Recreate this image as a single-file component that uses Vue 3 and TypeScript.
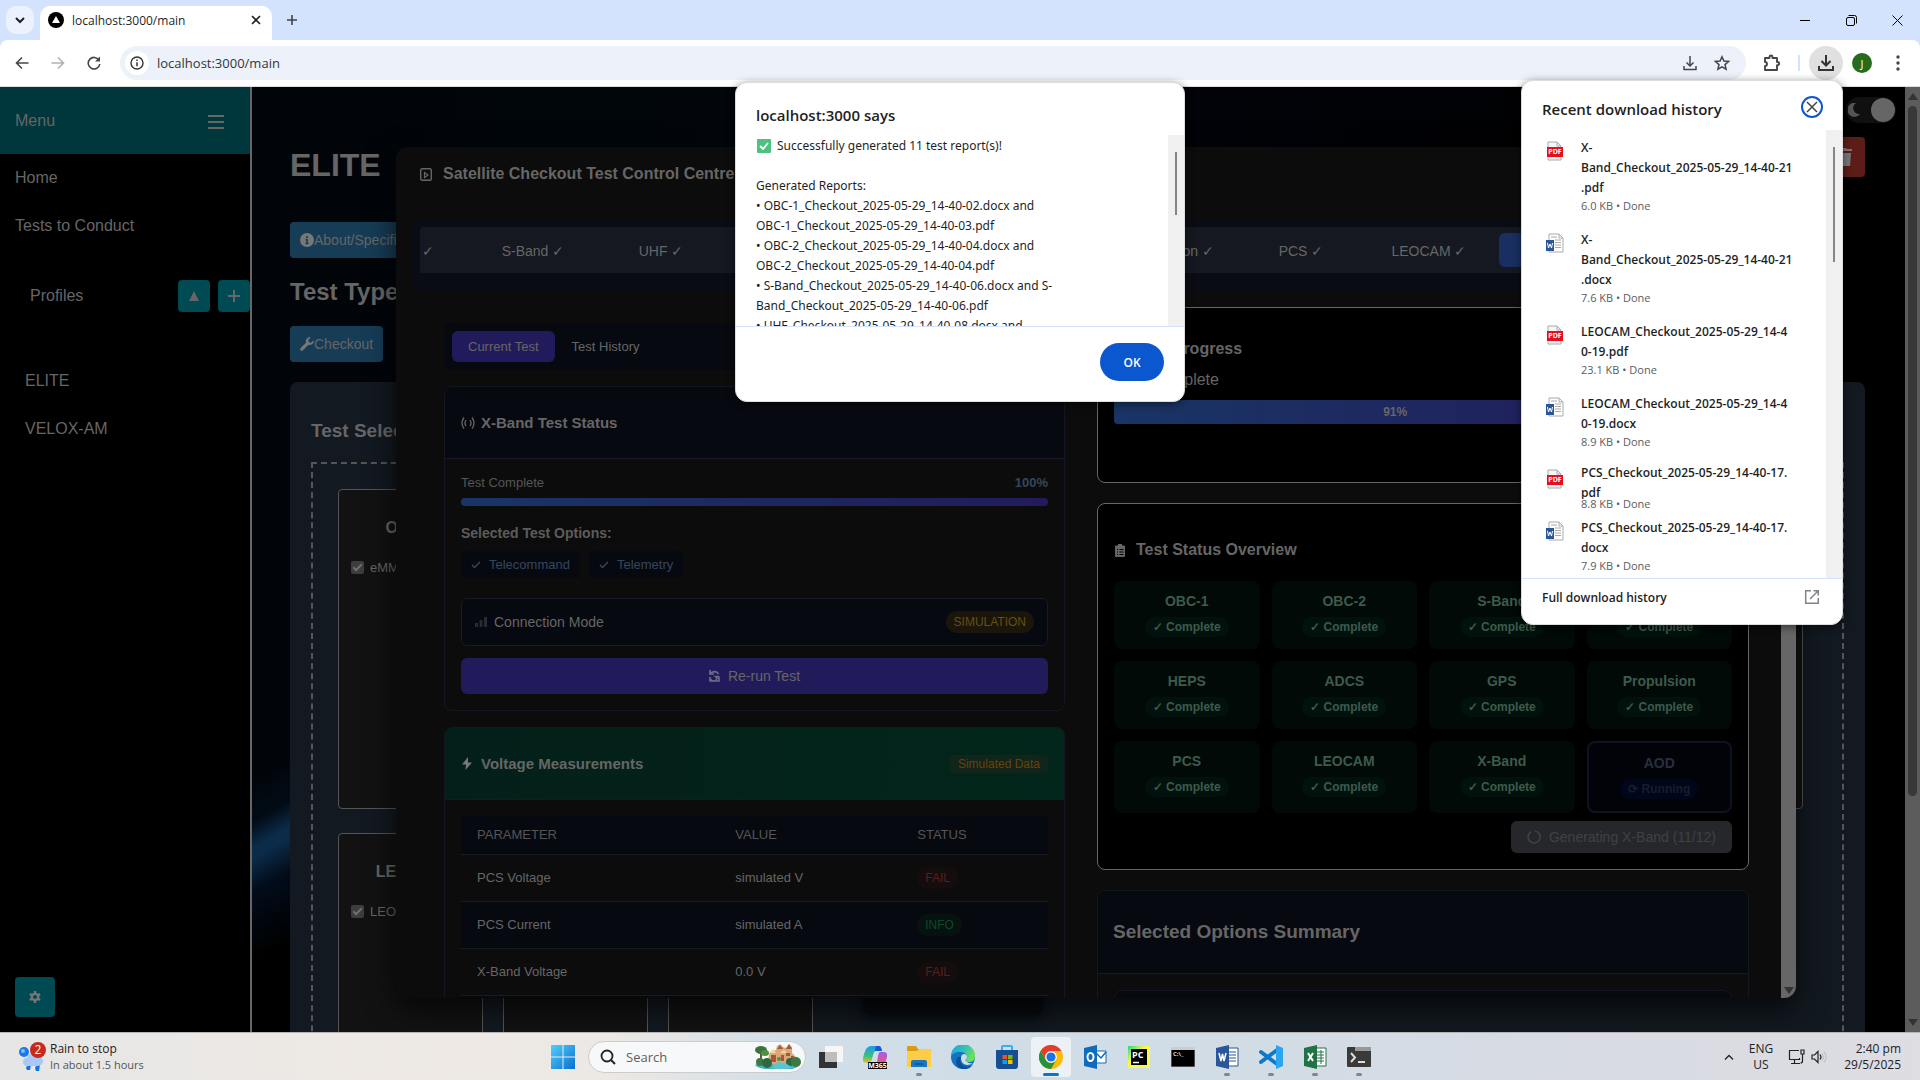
<script setup lang="ts">
interface Download { name: string[]; meta: string; kind: 'pdf' | 'docx'; compact?: boolean }
interface Reading { parameter: string; value: string; status: 'FAIL' | 'INFO' }
interface Subsystem { name: string; options: string[] }

const menu = ['Home', 'Tests to Conduct']
const profiles = ['ELITE', 'VELOX-AM']

const subsystems: Subsystem[] = [
  { name: 'OBC-1', options: ['eMMC'] },
  { name: 'OBC-2', options: [] },
  { name: 'S-Band', options: [] },
  { name: 'UHF', options: [] },
  { name: 'HEPS', options: [] },
  { name: 'ADCS', options: [] },
  { name: 'GPS', options: [] },
  { name: 'Propulsion', options: [] },
  { name: 'PCS', options: [] },
  { name: 'LEOCAM', options: ['LEOCAM'] },
  { name: 'X-Band', options: [] },
  { name: 'AOD', options: [] },
]

const tabs = ['OBC-2', 'S-Band', 'UHF', 'HEPS', 'ADCS', 'GPS', 'Propulsion', 'PCS', 'LEOCAM', 'X-Band']
const options = ['Telecommand', 'Telemetry']

const readings: Reading[] = [
  { parameter: 'PCS Voltage', value: 'simulated V', status: 'FAIL' },
  { parameter: 'PCS Current', value: 'simulated A', status: 'INFO' },
  { parameter: 'X-Band Voltage', value: '0.0 V', status: 'FAIL' },
  { parameter: 'X-Band Current', value: '0.0 A', status: 'FAIL' },
]

const progress = 91

const reportLines = [
  'Generated Reports:',
  '• OBC-1_Checkout_2025-05-29_14-40-02.docx and',
  'OBC-1_Checkout_2025-05-29_14-40-03.pdf',
  '• OBC-2_Checkout_2025-05-29_14-40-04.docx and',
  'OBC-2_Checkout_2025-05-29_14-40-04.pdf',
  '• S-Band_Checkout_2025-05-29_14-40-06.docx and S-',
  'Band_Checkout_2025-05-29_14-40-06.pdf',
  '• UHF_Checkout_2025-05-29_14-40-08.docx and',
]

const downloads: Download[] = [
  { name: ['X-', 'Band_Checkout_2025-05-29_14-40-21', '.pdf'], meta: '6.0 KB • Done', kind: 'pdf' },
  { name: ['X-', 'Band_Checkout_2025-05-29_14-40-21', '.docx'], meta: '7.6 KB • Done', kind: 'docx' },
  { name: ['LEOCAM_Checkout_2025-05-29_14-4', '0-19.pdf'], meta: '23.1 KB • Done', kind: 'pdf' },
  { name: ['LEOCAM_Checkout_2025-05-29_14-4', '0-19.docx'], meta: '8.9 KB • Done', kind: 'docx' },
  { name: ['PCS_Checkout_2025-05-29_14-40-17.', 'pdf'], meta: '8.8 KB • Done', kind: 'pdf', compact: true },
  { name: ['PCS_Checkout_2025-05-29_14-40-17.', 'docx'], meta: '7.9 KB • Done', kind: 'docx' },
]
</script>

<template>
  <div class="screen">
    <header class="tabstrip">
      <button class="tab-search" aria-label="Search tabs">
        <svg width="10" height="8" viewBox="0 0 10 8"><path d="M1 2l4 4 4-4" fill="none" stroke="#1f1f1f" stroke-width="2" /></svg>
      </button>
      <div class="tab">
        <svg width="16" height="16" viewBox="0 0 16 16"><circle cx="8" cy="8" r="8" fill="#000" /><path d="M8 4l4 7H4z" fill="#fff" /></svg>
        <span>localhost:3000/main</span>
        <button aria-label="Close tab"><svg width="10" height="10" viewBox="0 0 10 10"><path d="M1 1l8 8M9 1l-8 8" stroke="#1f1f1f" stroke-width="1.600" /></svg></button>
      </div>
      <button class="new-tab" aria-label="New tab"><svg width="12" height="12" viewBox="0 0 12 12"><path d="M6 1v10M1 6h10" stroke="#444" stroke-width="1.600" /></svg></button>
      <div class="window-controls">
        <button aria-label="Minimise"><svg width="10" height="10" viewBox="0 0 10 10"><path d="M0 5.500h10" stroke="#000" /></svg></button>
        <button aria-label="Restore"><svg width="11" height="11" viewBox="0 0 11 11"><g fill="none" stroke="#000"><rect x=".5" y="2.500" width="8" height="8" rx="1.500" /><path d="M2.500 .5h6a2 2 0 0 1 2 2v6" /></g></svg></button>
        <button aria-label="Close"><svg width="11" height="11" viewBox="0 0 11 11"><path d="M.5 .5l10 10M10.500 .5l-10 10" stroke="#000" /></svg></button>
      </div>
    </header>

    <nav class="toolbar">
      <button aria-label="Back"><svg width="14" height="14" viewBox="0 0 14 14"><path d="M13.500 7H2M7 1.500L1.500 7 7 12.500" fill="none" stroke="#454746" stroke-width="1.600" /></svg></button>
      <button aria-label="Forward"><svg width="14" height="14" viewBox="0 0 14 14"><path d="M.5 7H12M7 1.500L12.500 7 7 12.500" fill="none" stroke="#b0b2b4" stroke-width="1.600" /></svg></button>
      <button aria-label="Reload"><svg width="14" height="14" viewBox="0 0 14 14"><path d="M12 4.200A5.800 5.800 0 1 0 12.800 8" fill="none" stroke="#454746" stroke-width="1.600" /><path d="M13 .5v5H8z" fill="#454746" /></svg></button>
      <div class="omnibox">
        <span class="site-info"><svg width="14" height="14" viewBox="0 0 14 14"><circle cx="7" cy="7" r="6" fill="none" stroke="#333" stroke-width="1.400" /><path d="M7 6.200V10.300M7 3.600V5" stroke="#333" stroke-width="1.500" /></svg></span>
        <input type="text" aria-label="Address" value="localhost:3000/main" />
        <button aria-label="Install"><svg width="14" height="16" viewBox="0 0 14 16"><path d="M7 1v10M3.500 7.500L7 11l3.500-3.500M1 11v3.500h12V11" fill="none" stroke="#454746" stroke-width="1.500" /></svg></button>
        <button aria-label="Bookmark"><svg width="16" height="16" viewBox="0 0 16 16"><path d="M8 1.800l1.900 4.300 4.700.4-3.600 3.100 1.100 4.600L8 11.800l-4.100 2.400L5 9.600 1.400 6.500l4.700-.4z" fill="none" stroke="#454746" stroke-width="1.500" /></svg></button>
      </div>
      <button class="puzzle" aria-label="Extensions"><svg width="18" height="18" viewBox="0 0 18 18"><path d="M2 4h4.500V3a1.500 1.500 0 0 1 3 0v1H14v4h.6a1.500 1.500 0 0 1 0 3.200H14V16H2v-4a2 2 0 0 0 0-4z" fill="none" stroke="#454746" stroke-width="1.900" stroke-linejoin="round" /></svg></button>
      <i class="divider"></i>
      <button class="download-button" aria-label="Downloads"><svg width="18" height="18" viewBox="0 0 18 18"><path d="M9 1v10M4.500 7L9 11.500 13.500 7M2 12v4h14v-4" fill="none" stroke="#333" stroke-width="2" /></svg></button>
      <button class="avatar" aria-label="Profile">J</button>
      <button aria-label="More"><svg width="4" height="16" viewBox="0 0 4 16"><g fill="#454746"><circle cx="2" cy="2" r="1.700" /><circle cx="2" cy="8" r="1.700" /><circle cx="2" cy="14" r="1.700" /></g></svg></button>
    </nav>

    <div class="page">
      <aside class="sidebar">
        <div class="menu-head">
          <span>Menu</span>
          <button aria-label="Toggle menu"><svg width="16" height="16" viewBox="0 0 16 16"><path d="M0 3h16M0 9h16M0 15h16" stroke="#666" stroke-width="2" /></svg></button>
        </div>
        <a v-for="m in menu" :key="m" href="#">{{ m }}</a>
        <div class="profiles-head">
          <span>Profiles</span>
          <button aria-label="Collapse"><svg width="10" height="10" viewBox="0 0 10 10"><path d="M5 0l5 10H0z" fill="#666" /></svg></button>
          <button aria-label="Add profile"><svg width="12" height="12" viewBox="0 0 12 12"><path d="M6 0v12M0 6h12" stroke="#666" stroke-width="2" /></svg></button>
        </div>
        <a v-for="p in profiles" :key="p" class="profile" href="#">{{ p }}</a>
        <button class="gear" aria-label="Settings">
          <svg width="12" height="12" viewBox="0 0 14 14"><circle cx="7" cy="7" r="3.700" fill="none" stroke="#777" stroke-width="2.800" /><path d="M7 0v3M7 11v3M1 3.500l2.500 1.500M10.500 9L13 10.500M1 10.500L3.500 9M10.500 5L13 3.500" stroke="#777" stroke-width="2.800" /></svg>
        </button>
      </aside>

      <main class="content">
        <i class="horizon"></i>
        <div class="theme">
          <svg width="12" height="14" viewBox="0 0 12 14"><path d="M8 0a7 7 0 1 0 4 11A6 6 0 0 1 8 0z" fill="#555" /></svg>
          <i></i>
        </div>
        <div class="title-row">
          <h1>ELITE</h1>
          <button class="trash" aria-label="Delete"><svg width="16" height="18" viewBox="0 0 16 18"><path d="M0 1h5l1-1h4l1 1h5v2H0zM1 5h14l-1 13H2z" fill="#777" /></svg></button>
        </div>
        <button class="blue about">
          <svg width="14" height="14" viewBox="0 0 14 14"><circle cx="7" cy="7" r="7" fill="#777" /><path d="M7 6v5M7 3v2M5.500 10.500h3M5.500 6.500H7" stroke="#163c56" stroke-width="1.600" /></svg>About/Specifications
        </button>
        <h2>Test Type</h2>
        <button class="blue">
          <svg width="14" height="14" viewBox="0 0 14 14"><path d="M1.800 12.200L8 6" stroke="#777" stroke-width="3.200" stroke-linecap="round" /><path d="M13.600 3.200L11 5.700 8.400 5.600 8.300 3 10.800.4A4 4 0 0 0 6 5.500a4 4 0 0 0 7.600-2.300z" fill="#777" /></svg>Checkout
        </button>
        <section class="panel">
          <h3>Test Selection</h3>
          <div class="dashed">
            <article v-for="s in subsystems" :key="s.name">
              <h4>{{ s.name }}</h4>
              <label v-for="o in s.options" :key="o"><input type="checkbox" checked disabled />{{ o }}</label>
            </article>
          </div>
          <button class="start" aria-label="Start tests"></button>
        </section>
      </main>
      <div class="page-scroll"><i class="up"></i><b></b><i class="down"></i></div>

      <div class="modal">
        <div class="modal-main">
          <div class="modal-head">
            <svg width="12" height="13" viewBox="0 0 12 13"><rect x=".7" y=".7" width="10.600" height="11.600" rx="1.500" fill="none" stroke="#666" stroke-width="1.400" /><path d="M4.500 4.500l3.500 2.500-3.500 2.500z" fill="none" stroke="#666" stroke-width="1.200" /></svg>
            <h2>Satellite Checkout Test Control Centre</h2>
          </div>
          <div class="tabs">
            <div class="tabs-view">
              <div class="tabs-row">
                <button v-for="t in tabs" :key="t" :class="{ active: t === 'X-Band' }">{{ t }} ✓</button>
              </div>
            </div>
          </div>
          <div class="columns">
            <div class="left">
              <div class="subtabs">
                <button class="on">Current Test</button>
                <button>Test History</button>
              </div>
              <section class="card">
                <header>
                  <svg width="14" height="12" viewBox="0 0 14 12"><g fill="none" stroke="#666" stroke-width="1.300"><path d="M3 .5Q-1 6 3 11.500M11 .5q4 5.500 0 11M5 3Q3 6 5 9M9 3q2 3 0 6" /></g></svg>
                  <h3>X-Band Test Status</h3>
                </header>
                <div class="card-body">
                  <div class="between line"><span>Test Complete</span><strong>100%</strong></div>
                  <div class="bar"></div>
                  <h4>Selected Test Options:</h4>
                  <div class="chips">
                    <span v-for="o in options" :key="o"><svg width="10" height="8" viewBox="0 0 10 8"><path d="M1 4l2.500 2.500L9 1" fill="none" stroke="#33475e" stroke-width="1.500" /></svg>{{ o }}</span>
                  </div>
                  <div class="connection between">
                    <svg width="12" height="10" viewBox="0 0 12 10"><path d="M0 6h3v4H0zM4.500 3h3v7h-3zM9 0h3v10H9z" fill="#282b31" /></svg>
                    <span>Connection Mode</span>
                    <em>SIMULATION</em>
                  </div>
                  <button class="rerun">
                    <svg width="11" height="12" viewBox="0 0 11 12"><path d="M1 0v4h4M1.500 4A4.500 4.500 0 0 1 9.500 4M10 6.500H6.500L8 8A3.500 3.500 0 0 1 1 7V11H10V6.500" fill="none" stroke="#6d6a86" stroke-width="1.700" /></svg>
                    Re-run Test
                  </button>
                </div>
              </section>
              <section class="card voltage">
                <header class="green">
                  <svg width="12" height="13" viewBox="0 0 12 13"><path d="M7 0L1 7.500h4L4.500 13 11 5.500H7z" fill="#777" /></svg>
                  <h3>Voltage Measurements</h3>
                  <em>Simulated Data</em>
                </header>
                <div class="card-body">
                  <table>
                    <thead><tr><th>PARAMETER</th><th>VALUE</th><th>STATUS</th></tr></thead>
                    <tbody>
                      <tr v-for="r in readings" :key="r.parameter">
                        <td>{{ r.parameter }}</td><td>{{ r.value }}</td>
                        <td><span :class="r.status.toLowerCase()">{{ r.status }}</span></td>
                      </tr>
                    </tbody>
                  </table>
                </div>
              </section>
            </div>

            <div class="right">
              <section class="outlined overall">
                <h3>Overall Progress</h3>
                <p>{{ progress }}% Complete</p>
                <div class="track"><div :style="{ width: progress + '%' }">{{ progress }}%</div></div>
              </section>
              <section class="outlined overview">
                <div class="overview-head">
                  <svg width="10" height="13" viewBox="0 0 10 13"><path d="M1 1.500h2V0h4v1.500h2q1 0 1 1V12q0 1-1 1H1q-1 0-1-1V2.500q0-1 1-1z" fill="#666" /><path d="M2 5.500h1M4.500 5.500h4M2 8h1M4.500 8h4M2 10.500h1M4.500 10.500h4" stroke="#000" /></svg>
                  <h3>Test Status Overview</h3>
                </div>
                <div class="status-grid">
                  <div v-for="s in subsystems" :key="s.name" :class="{ running: s.name === 'AOD' }">
                    <b>{{ s.name }}</b>
                    <span>{{ s.name === 'AOD' ? '⟳ Running' : '✓ Complete' }}</span>
                  </div>
                </div>
                <button class="generating" disabled>
                  <svg width="14" height="14" viewBox="0 0 14 14"><path d="M8 1a6 6 0 1 1-4 .8" fill="none" stroke="#404145" stroke-width="1.600" /></svg>
                  Generating X-Band (11/12)
                </button>
              </section>
              <section class="card summary">
                <header><h2>Selected Options Summary</h2></header>
                <div class="card-body"><div class="inner"></div></div>
              </section>
            </div>
          </div>
        </div>
        <div class="modal-scroll"><i class="down"></i></div>
      </div>
    </div>

    <footer class="taskbar">
      <div class="weather">
        <svg width="28" height="32" viewBox="0 0 28 32">
          <circle cx="5" cy="11" r="5" fill="#1b78e8" /><circle cx="4" cy="10" r="2" fill="#7cc0ff" />
          <path d="M7 27l2-4 3 1-1 5H8zM16 27l2-4 3 1-1 6h-3z" fill="#1673e6" />
          <path d="M8 25a4 4 0 0 1 0-8 6 6 0 0 1 11-2 5 5 0 0 1 0 10z" fill="#a9c8f6" />
          <circle cx="19" cy="9" r="8" fill="#c42b1c" />
          <text x="19" y="13" text-anchor="middle" font-size="12" fill="#fff">2</text>
        </svg>
        <div><span>Rain to stop</span><small>In about 1.5 hours</small></div>
      </div>
      <div class="dock">
        <button aria-label="Start"><svg width="24" height="24" viewBox="0 0 24 24"><defs><linearGradient id="win" x1="0" y1="0" x2="1" y2="1"><stop offset="0" stop-color="#4fd0ff" /><stop offset="1" stop-color="#0a6fd0" /></linearGradient></defs><path d="M0 0h11.500v11.500H0zM12.500 0H24v11.500H12.500zM0 12.500h11.500V24H0zM12.500 12.500H24V24H12.500z" fill="url(#win)" /></svg></button>
        <label class="search">
          <svg width="16" height="16" viewBox="0 0 16 16"><circle cx="7" cy="7" r="5.500" fill="none" stroke="#222" stroke-width="1.800" /><path d="M11 11l4 4" stroke="#222" stroke-width="2" /></svg>
          <input type="text" placeholder="Search" aria-label="Search" />
          <svg width="46" height="26" viewBox="0 0 46 26">
            <path d="M0 21q10-5 22-2t23 0q0 4-8 6H10q-8-1-10-4z" fill="#45b3c4" />
            <path d="M13 19l1-9 4-3 3-1 1-4 3-2 3 3 3 1 3-4 3 3v6l4 4 2 7q-12 3-28 0z" fill="#dba878" />
            <path d="M22 5l3-4 3 4zM31 5l3-5 3 5zM16 11h5v7h-5zM26 11h3v6h-3zM31 9h4v3h-4zM36 12h3v4h-3z" fill="#a3583a" />
            <path d="M14 9l4-4 3 4zM25 9l4-3 3 3z" fill="#f4d8a0" />
            <path d="M5 9h2v9H5z" fill="#765039" /><ellipse cx="6" cy="6" rx="6" ry="4" fill="#39733d" /><ellipse cx="10" cy="9" rx="4" ry="3" fill="#4c8f45" />
            <circle cx="5" cy="18" r="4" fill="#3b7a42" /><circle cx="12" cy="19" r="5" fill="#2f6840" /><circle cx="35" cy="18" r="4" fill="#2f6840" /><circle cx="41" cy="18" r="5" fill="#3b7a42" /><circle cx="24" cy="15" r="2" fill="#4c8f45" />
            <path d="M17 24q4-8 12-5 6 2 7 5-9 2-19 0z" fill="#58c5d2" />
          </svg>
        </label>
        <button aria-label="Task view"><svg width="24" height="24" viewBox="0 0 24 24"><path d="M0 7h18v16H0z" fill="#333" /><path d="M6 1h18v16H6z" fill="#f6f6f6" /><path d="M6 7h12v10H6z" fill="#bdbdbd" /></svg></button>
        <button aria-label="Microsoft 365">
          <svg width="24" height="24" viewBox="0 0 24 24">
            <defs>
              <linearGradient id="cpa" x1="0" y1="0" x2="0" y2="1"><stop offset="0" stop-color="#1a9bf0" /><stop offset=".6" stop-color="#3cc07a" /><stop offset="1" stop-color="#f0c020" /></linearGradient>
              <linearGradient id="cpb" x1="0" y1="0" x2="0" y2="1"><stop offset="0" stop-color="#a35ce8" /><stop offset=".6" stop-color="#e0569a" /><stop offset="1" stop-color="#f58a4a" /></linearGradient>
            </defs>
            <path d="M8 1h8q2 0 3 5h-6q-2 0-3 4l-1 4q-1 4-4 4H4q-5 0-4-5 1-5 3-9 2-3 5-3z" fill="url(#cpa)" />
            <path d="M13 1h3q2 0 3 5h-6q-2 0 0-5z" fill="#1a57d0" />
            <path d="M17 7h4q4 0 3 5-1 4-2 7-2 3-5 3h-6q3-1 3-5l1-6q1-4 2-4z" fill="url(#cpb)" />
            <path d="M5 17h19v7H5z" fill="#000" /><text x="14.500" y="23" font-size="7" font-weight="700" text-anchor="middle" fill="#fff">M365</text>
          </svg>
        </button>
        <button class="open" aria-label="File Explorer"><svg width="24" height="24" viewBox="0 0 24 24"><path d="M0 2q0-1 1-1h8l2 3h12q1 0 1 1v5H0z" fill="#dc9c10" /><path d="M0 6h10l2-2h11q1 0 1 1v17H0z" fill="#ffcd45" /><path d="M4 17q0-2 2-2h12q2 0 2 2v5H4z" fill="#1976c5" /><path d="M8 18h8v2H8z" fill="#0f599f" /></svg></button>
        <button aria-label="Edge">
          <svg width="24" height="24" viewBox="0 0 24 24">
            <defs><linearGradient id="edge" x1="0" y1="0" x2="1" y2=".4"><stop offset="0" stop-color="#1ea4e0" /><stop offset=".6" stop-color="#35c1b5" /><stop offset="1" stop-color="#6be05a" /></linearGradient></defs>
            <circle cx="12" cy="12" r="12" fill="#1173c4" />
            <path d="M0 11A12 12 0 0 1 24 11q0 6-6 6-4 0-4-2 2-1 2-3 0-4-5-5Q4 6 0 11z" fill="url(#edge)" />
            <path d="M10 12q-2 6 3 9 4 2 9-1-4 5-11 4-6-2-6-8 1-5 5-4z" fill="#0b4f97" />
            <path d="M14 15q2-1 2-3t-2-3q-4 0-4 4 0 6 6 7 3 0 6-2-4 1-6-1-2-1-2-2z" fill="#d1dee8" />
          </svg>
        </button>
        <button aria-label="Store"><svg width="24" height="24" viewBox="0 0 24 24"><path d="M7 7V2q0-1 1-1h8q1 0 1 1v5" fill="none" stroke="#2bb5f4" stroke-width="2" /><path d="M1 5h22v16q0 3-3 3H4q-3 0-3-3z" fill="#174e92" /><path d="M7.500 10H12v4H7.500z" fill="#f25022" /><path d="M13 10h4.500v4H13z" fill="#7fba00" /><path d="M7.500 15H12v4H7.500z" fill="#00a4ef" /><path d="M13 15h4.500v4H13z" fill="#ffb900" /></svg></button>
        <button class="current" aria-label="Chrome"><svg width="24" height="24" viewBox="0 0 24 24"><circle cx="12" cy="12" r="12" fill="#fbbc04" /><path d="M1.600 6A12 12 0 0 1 22.400 6H12a6 6 0 0 0-5.200 9z" fill="#e33b2e" /><path d="M1.600 6l5.200 9a6 6 0 0 0 10.400 0L12 24A12 12 0 0 1 1.600 6z" fill="#229342" /><circle cx="12" cy="12" r="5.800" fill="#fff" /><circle cx="12" cy="12" r="4.600" fill="#1a73e8" /></svg></button>
        <button aria-label="Outlook"><svg width="24" height="24" viewBox="0 0 24 24"><path d="M12 6h11v12H12z" fill="#fff" stroke="#0f6cbd" /><path d="M12 7l6 6 5-6" fill="none" stroke="#0f6cbd" stroke-width="1.500" /><path d="M1 3l13-3v24L1 21z" fill="#0f6cbd" /><ellipse cx="7.500" cy="12" rx="3" ry="4" fill="none" stroke="#fff" stroke-width="2" /></svg></button>
        <button aria-label="PyCharm"><svg width="22" height="22" viewBox="0 0 22 22"><defs><linearGradient id="pc" x1="0" y1="0" x2="1" y2="1"><stop offset="0" stop-color="#21d789" /><stop offset=".4" stop-color="#fcf84a" /></linearGradient></defs><path d="M0 0h22v22H0z" fill="url(#pc)" /><path d="M3 3h16v16H3z" /><path d="M5 16.500h6" stroke="#fff" stroke-width="1.500" /><text x="4" y="12" font-size="9" font-weight="700" fill="#fff">PC</text></svg></button>
        <button aria-label="Command Prompt"><svg width="24" height="20" viewBox="0 0 24 20"><path d="M0 0h24v20H0z" fill="#000" stroke="#999" /><path d="M0 0h24v3H0z" fill="#ccc" /><text x="2" y="9" font-size="6" font-weight="700" fill="#ddd">C:\_</text></svg></button>
        <button class="open" aria-label="Word"><svg width="24" height="24" viewBox="0 0 24 24"><path d="M11 3h12v18H11z" fill="#fff" stroke="#2b579a" /><path d="M14 7h7M14 10h7M14 13h7M14 16h7" stroke="#2b579a" /><path d="M1 3l13-3v24L1 21z" fill="#2b579a" /><path d="M4 8l2 8 1.500-7L9 16l2-8" fill="none" stroke="#fff" stroke-width="1.500" /></svg></button>
        <button class="open" aria-label="Visual Studio Code"><svg width="24" height="24" viewBox="0 0 24 24"><path d="M18 5L2 17M18 19L2 7" stroke="#0c79c9" stroke-width="3.800" stroke-linecap="round" /><path d="M17 0l7 3v18l-7 3z" fill="#2aa5f0" /></svg></button>
        <button class="open" aria-label="Excel"><svg width="24" height="24" viewBox="0 0 24 24"><path d="M11 3h12v18H11z" fill="#fff" stroke="#217346" /><path d="M14 7h7M14 10h7M14 13h7M14 16h7M18 5v14" stroke="#217346" /><path d="M1 3l13-3v24L1 21z" fill="#217346" /><path d="M5 8l5 8M10 8l-5 8" stroke="#fff" stroke-width="2" /></svg></button>
        <button class="open" aria-label="Terminal"><svg width="24" height="20" viewBox="0 0 24 20"><path d="M0 1q0-1 1-1h22q1 0 1 1v18q0 1-1 1H1q-1 0-1-1z" fill="#3a3a3a" /><path d="M8 0h16v4H8z" fill="#999" /><path d="M4 6l4 4.500L4 15M11 15h7" fill="none" stroke="#ddd" stroke-width="2" /></svg></button>
      </div>
      <div class="tray">
        <svg width="10" height="6" viewBox="0 0 10 6"><path d="M1 5.500l4-4 4 4" fill="none" stroke="#222" stroke-width="1.300" /></svg>
        <div class="lang"><span>ENG</span><span>US</span></div>
        <svg width="18" height="16" viewBox="0 0 18 16"><path d="M11 1.500H1.500v9h10V9M3 14.500h9M6.500 11v3.500M13 1h3v4h-3zM14.500 5v7q0 2-2 2" fill="none" stroke="#222" stroke-width="1.200" /></svg>
        <svg width="16" height="14" viewBox="0 0 16 14"><path d="M1 5h2.500L7 1.500v11L3.500 9H1z" fill="none" stroke="#222" stroke-width="1.200" /><path d="M9 4.500q2 2.500 0 5" fill="none" stroke="#222" stroke-width="1.200" /><path d="M11 3q3 4 0 8M13 1.500q4 5.500 0 11" fill="none" stroke="#bbb" /></svg>
        <div class="clock"><span>2:40 pm</span><span>29/5/2025</span></div>
      </div>
    </footer>

    <div class="alert" role="alertdialog">
      <h2>localhost:3000 says</h2>
      <div class="alert-body">
        <div class="alert-text">
          <p class="first"><svg width="14" height="14" viewBox="0 0 14 14"><rect width="14" height="14" rx="1" fill="#4cc27e" /><path d="M3 7l3 3 5-6" fill="none" stroke="#fff" stroke-width="1.800" /></svg>Successfully generated 11 test report(s)!</p>
          <p v-for="l in reportLines" :key="l">{{ l }}</p>
        </div>
        <div class="light-scroll"><i></i></div>
      </div>
      <div class="alert-foot"><button>OK</button></div>
    </div>

    <div class="downloads" role="dialog">
      <div class="downloads-head">
        <h2>Recent download history</h2>
        <button aria-label="Close"><svg width="12" height="12" viewBox="0 0 12 12"><path d="M1 1l10 10M11 1L1 11" stroke="#454746" stroke-width="1.500" /></svg></button>
      </div>
      <div class="downloads-body">
        <ul>
          <li v-for="d in downloads" :key="d.name.join('')" :class="{ compact: d.compact }">
            <svg v-if="d.kind === 'pdf'" width="20" height="20" viewBox="0 0 20 20"><path d="M3 1h9l4 4v14H3z" fill="#f5f5f5" stroke="#aaa" /><path d="M12 1v4h4" fill="none" stroke="#aaa" /><path d="M2 6h16v10H2z" fill="#e5101d" /><text x="10" y="13" font-size="7" font-weight="700" text-anchor="middle" fill="#fff">PDF</text></svg>
            <svg v-else width="20" height="20" viewBox="0 0 20 20"><path d="M4 1h10l4 4v14H4z" fill="#fff" stroke="#aaa" /><path d="M14 1v4h4M6 4h6M10 7h6M10 9.500h6M10 12h6M10 14.500h6" fill="none" stroke="#aaa" /><path d="M1 7h8v11H1z" fill="#2b579a" /><path d="M2.500 10l1 5 1.500-4 1.500 4 1-5" fill="none" stroke="#fff" /></svg>
            <div>
              <p class="name"><template v-for="part in d.name" :key="part">{{ part }}<br /></template></p>
              <p class="meta">{{ d.meta }}</p>
            </div>
          </li>
        </ul>
        <div class="light-scroll tall"><i></i></div>
      </div>
      <a class="downloads-foot" href="#">
        Full download history
        <svg width="16" height="16" viewBox="0 0 16 16"><path d="M7 1.700H1.700v12.600h12.600V9M9.500 1.700h4.800v4.800M14 2L6 10" fill="none" stroke="#80848a" stroke-width="1.500" /></svg>
      </a>
    </div>
  </div>
</template>

<style>
body { margin: 0; background: #000; }
</style>

<style scoped>
* { box-sizing: border-box; margin: 0; padding: 0; }
button { border: 0; background: none; font: inherit; color: inherit; display: flex; align-items: center; justify-content: center; flex: none; }
a { color: inherit; text-decoration: none; }
svg { display: block; flex: none; }
em { font-style: normal; }
.screen { position: relative; height: 100vh; display: flex; flex-direction: column; overflow: hidden; font-family: "Open Sans", "Noto Sans", sans-serif; color: #1f1f1f; font-size: 12px; }

/* browser chrome */
.tabstrip { height: 40px; flex: none; background: #d3e3fd; display: flex; padding: 6px 0 0 6px; }
.tab-search { width: 28px; height: 28px; border-radius: 10px; background: #ecf2fd; margin-right: 6px; }
.tab { width: 232px; background: #fff; border-radius: 10px 10px 0 0; display: flex; align-items: center; padding: 0 11px 6px 8px; gap: 8px; }
.tab span { flex: 1; }
.new-tab { width: 28px; height: 28px; margin-left: 6px; }
.window-controls { margin-left: auto; display: flex; height: 28px; }
.window-controls button { width: 46px; }
.toolbar { height: 47px; flex: none; background: #fff; border-bottom: 1px solid #ddd; display: flex; align-items: center; padding: 0 4px; border-radius: 8px 8px 0 0; box-shadow: 0 -8px 0 #d3e3fd; }
.tabstrip, .tab { position: relative; z-index: 1; }
.toolbar > button { width: 36px; height: 34px; }
.omnibox { flex: 1; height: 34px; border-radius: 17px; background: #ecf1fa; margin-left: 8px; display: flex; align-items: center; padding: 0 8px 0 5px; }
.site-info { width: 24px; height: 24px; border-radius: 50%; background: #fff; display: grid; place-items: center; margin-right: 8px; }
.omnibox input { flex: 1; border: 0; background: none; font: 13px "Open Sans", sans-serif; color: #33373b; }
.omnibox button { width: 32px; height: 32px; }
.toolbar > .puzzle { margin-left: 8px; }
.divider { width: 2px; height: 16px; background: #d3e3fd; margin: 0 9px 0 8px; }
.toolbar > .download-button { width: 34px; border-radius: 50%; background: #e0e0e0; margin-right: 9px; }
.toolbar > .avatar { width: 20px; height: 20px; border-radius: 50%; background: #276b1c; color: #fff; font-size: 11px; margin-right: 8px; }

/* application page */
.page { flex: 1; min-height: 0; position: relative; display: flex; overflow: hidden; background: #000; color: #666; font-family: "Liberation Sans", Arial, sans-serif; }
.sidebar { width: 252px; flex: none; background: #000; border-right: 2px solid #666; font-size: 16px; display: flex; flex-direction: column; }
.menu-head { height: 67px; flex: none; background: #00373d; display: flex; align-items: center; justify-content: space-between; padding: 0 26px 0 15px; }
.sidebar a { height: 48px; line-height: 48px; padding-left: 15px; }
.sidebar a.profile { padding-left: 25px; }
.profiles-head { display: flex; align-items: center; gap: 8px; height: 32px; margin: 30px 0 45px; padding-left: 30px; }
.profiles-head span { flex: 1; }
.profiles-head button { width: 32px; height: 32px; border-radius: 4px; background: #004a54; }
.gear { width: 40px; height: 40px; border-radius: 4px; background: #004a54; margin: auto 0 15px 15px; }
.content { flex: 1; min-width: 0; position: relative; padding: 50px 40px 0 38px; display: flex; flex-direction: column; align-items: flex-start; background: linear-gradient(90deg, #01050a, #02070c 30%, #010308 60%, #000 90%); }
.horizon { position: absolute; left: 0; top: 600px; bottom: 0; width: 38px; background: linear-gradient(150deg, transparent 25%, #020c16 37%, #0b2b49 44%, #0b2b49 47%, #020c1a 56%, #000 75%); }
.theme { position: absolute; top: 10px; right: 9px; width: 50px; height: 26px; border-radius: 13px; background: #101010; display: flex; align-items: center; justify-content: space-between; padding: 0 1px 0 2px; }
.theme i { width: 24px; height: 24px; border-radius: 50%; background: #666; }
.title-row { flex: none; align-self: stretch; display: flex; justify-content: space-between; height: 85px; }
h1 { font-size: 32px; line-height: 36px; margin-top: 10px; }
.trash { width: 42px; height: 40px; border-radius: 4px; background: #5c1c18; }
.blue { height: 36px; padding: 0 10px; border-radius: 4px; background: #163c56; font-size: 14px; }
.content > h2 { flex: none; font-size: 24px; line-height: 28px; margin: 20px 0; }
.panel { position: relative; align-self: stretch; margin-top: 20px; flex: 1; min-height: 0; background: #121920; border-radius: 8px 8px 0 0; padding: 37px 21px 0; }
.panel h3 { font-size: 19px; line-height: 24px; }
.dashed { margin-top: 19px; height: 700px; border: 2px dashed #555; padding: 25px 24px 0 25px; display: grid; grid-template-columns: repeat(auto-fill, 145px); grid-auto-rows: 320px; gap: 24px 20px; }
article { background: #121212; border: 1px solid #555; border-radius: 4px; padding: 26px 12px; }
article h4 { font-size: 16px; line-height: 24px; text-align: center; margin-bottom: 20px; }
label { display: flex; align-items: center; gap: 6px; font-size: 13px; }
article input { appearance: none; width: 13px; height: 13px; border-radius: 2px; background: #3d3d3d; position: relative; }
article input::after { content: ""; position: absolute; left: 4px; top: 1px; width: 3px; height: 7px; border: solid #707070; border-width: 0 2px 2px 0; transform: rotate(45deg); }
.start { position: absolute; left: 573px; bottom: 17px; width: 180px; height: 48px; border-radius: 8px; background: #080b10; box-shadow: 0 4px 12px #080b10; }
.page-scroll { width: 15px; flex: none; background: #5c5c5c; display: flex; flex-direction: column; align-items: center; padding: 6px 0; }
.page-scroll b { width: 9px; height: 690px; border-radius: 5px; background: #383838; margin-top: 6px; }
.up, .down { border: 5px solid transparent; }
.up { border-top: 0; border-bottom: 7px solid #333; }
.down { border-bottom: 0; border-top: 7px solid #333; margin-top: auto; }

/* checkout modal */
.modal { position: absolute; left: 396px; right: 124px; top: 60px; bottom: 34px; border-radius: 12px; background: #0c0c0c; overflow: hidden; display: flex; box-shadow: 0 10px 30px rgba(0, 0, 0, 0.7); }
.modal-main { flex: 1; min-width: 0; padding: 0 16px; }
.modal-scroll { width: 15px; background: #666; display: flex; flex-direction: column; align-items: center; padding-bottom: 4px; }
.modal-head { height: 72px; display: flex; gap: 11px; padding: 17px 8px; }
.modal-head svg { margin-top: 4px; }
.modal-head h2 { font-size: 16px; line-height: 20px; }
.tabs { height: 72px; border-radius: 8px; background: #090c13; padding: 8px; }
.tabs-view { height: 46px; overflow: hidden; background: #151820; border-radius: 4px 4px 0 0; }
.tabs-row { display: flex; align-items: center; height: 46px; margin-left: -79px; }
.tabs-row button { width: 116px; height: 34px; margin: 0 6px; padding-top: 2px; font-size: 14px; border-radius: 6px; }
.tabs-row .active { background: #192f62; }
.columns { display: grid; grid-template-columns: 621fr 652fr; gap: 32px; padding: 16px 16px 0 32px; }
.left { padding-top: 16px; }
.subtabs { height: 47px; background: #070910; border-radius: 8px; display: flex; padding: 8px; margin-bottom: 16px; }
.subtabs button { height: 31px; padding: 0 16px; border-radius: 6px; font-size: 13px; }
.subtabs .on { background: #221b5b; margin-right: 1px; }
.card { border: 1px solid #14171f; border-radius: 8px; overflow: hidden; margin-bottom: 16px; }
.card header { height: 72px; display: flex; align-items: center; background: #070910; border-bottom: 1px solid #171a22; padding: 0 16px; gap: 6px; }
.card h3 { font-size: 15px; }
.card header.green { background: linear-gradient(90deg, #041f19, #02261b); gap: 8px; }
.green em { margin-left: auto; font-size: 12px; line-height: 18px; padding: 0 8px; border-radius: 4px; background: #12251a; color: #684409; }
.card-body { padding: 16px; }
.between { display: flex; align-items: center; justify-content: space-between; }
.line { font-size: 13px; line-height: 16px; margin-bottom: 7px; color: #555; }
.line strong { color: #33475e; }
.bar { height: 8px; border-radius: 4px; background: linear-gradient(90deg, #193565, #221b5b); }
.card h4 { font-size: 14px; line-height: 20px; margin: 17px 0 8px; color: #5c5c5c; }
.chips { display: flex; gap: 9px; }
.chips span { height: 27px; display: flex; align-items: center; gap: 8px; padding: 0 10px; border-radius: 4px; background: #070910; font-size: 13px; color: #33475e; }
.connection { height: 48px; margin: 20px 0 12px; border: 1px solid #171b23; border-radius: 6px; background: #070910; padding: 0 13px; font-size: 14px; gap: 7px; }
.connection em { margin-left: auto; font-size: 12px; line-height: 22px; border-radius: 11px; padding: 0 8px; background: #1b150c; color: #66500c; }
.rerun { width: 100%; height: 36px; border-radius: 6px; background: #221b5b; font-size: 14px; gap: 8px; }
table { width: 100%; border-collapse: collapse; table-layout: fixed; font-size: 13px; }
th, td { text-align: left; padding: 0 16px; border-bottom: 1px solid #171a22; }
th { height: 38px; font-weight: 400; color: #555; width: 25%; }
th:first-child { width: 44%; }
th:nth-child(2) { width: 31%; }
td { height: 47px; }
thead tr, tbody tr:nth-child(even) { background: #070910; }
td span { display: inline-block; font-size: 12px; line-height: 22px; border-radius: 11px; padding: 0 8px; }
.fail { background: #150d0d; color: #5e1c1c; }
.info { background: #07120f; color: #064a34; }
.outlined { border: 1px solid #666; border-radius: 8px; background: #000; padding: 0 16px; }
.overall { height: 176px; margin-bottom: 20px; padding-top: 31px; }
.outlined h3 { font-size: 16px; line-height: 20px; }
.overall p { font-size: 16px; line-height: 20px; margin: 11px 0 10px; }
.track { height: 24px; border-radius: 4px; overflow: hidden; background: #111; }
.track div { height: 24px; line-height: 24px; text-align: center; font-size: 12px; font-weight: 700; background: linear-gradient(90deg, #193565, #221b5b); }
.overview { padding-bottom: 16px; margin-bottom: 20px; }
.overview-head { display: flex; align-items: center; gap: 11px; padding: 36px 0 21px 1px; }
.status-grid { display: grid; grid-template-columns: repeat(4, 1fr); gap: 12px; }
.status-grid > div { min-height: 68px; border-radius: 8px; background: #010a07; color: #3d5a4d; display: flex; flex-direction: column; align-items: center; padding-top: 10px; }
.status-grid b { font-size: 14px; line-height: 20px; margin-bottom: 6px; }
.status-grid span { font-size: 12px; font-weight: 700; line-height: 20px; padding: 0 8px; border-radius: 10px; background: #01120c; }
.status-grid .running { border: 2px solid #0e1322; background: #020309; color: #27303f; min-height: 72px; }
.status-grid .running span { background: #02061a; color: #161e2e; }
.generating { height: 32px; margin: 8px 0 0 auto; padding: 0 16px; gap: 8px; border-radius: 6px; background: #26272b; color: #404145; font-size: 14px; }
.summary header { height: 83px; padding: 0 15px; }
.summary h2 { font-size: 19px; }
.inner { height: 60px; border: 1px solid #14171f; border-radius: 8px; background: #070910; }

/* taskbar */
.taskbar { height: 48px; flex: none; border-top: 1px solid #b5b5b5; display: flex; align-items: center; background: linear-gradient(90deg, #e6e6e6, #eee9e4 20%, #ece8e3 32%, #d1dee8 41%, #d0dde6 60%, #d8dbe3 82%, #dddde2); position: relative; }
.weather { display: flex; gap: 3px; padding-left: 19px; flex: 1; }
.weather div, .lang, .clock { display: flex; flex-direction: column; line-height: 16px; font-size: 12px; color: #222; }
.weather small { font-size: 11px; color: #555; }
.dock { display: flex; align-items: center; height: 46px; padding-left: 2px; }
.dock button { position: relative; width: 40px; height: 40px; margin: 0 2px; border-radius: 4px; }
.dock .current { background: rgba(255, 255, 255, 0.6); }
.dock .open::after, .dock .current::after { content: ""; position: absolute; bottom: 1px; left: 17px; width: 6px; height: 3px; border-radius: 2px; background: #80868c; }
.dock .current::after { left: 12px; width: 16px; background: #0078d4; }
.search { width: 218px; height: 32px; margin: 0 3px; border-radius: 16px; border: 1px solid #ccc; background: #f7f8f9; padding: 0 4px 0 11px; gap: 10px; }
.search input { flex: 1; min-width: 0; border: 0; background: none; font: 13px "Open Sans", sans-serif; }
.search input::placeholder { color: #606060; opacity: 1; }
.tray { flex: 1; display: flex; align-items: center; justify-content: flex-end; padding-right: 19px; gap: 15px; }
.lang { text-align: center; }
.lang + svg { margin-right: -10px; }
.clock { text-align: right; margin-left: 2px; }

/* floating browser dialogs */
.alert { position: absolute; z-index: 3; top: 82px; left: 50%; transform: translateX(-50%); width: 450px; height: 320px; background: #fff; border-radius: 12px; border: 1px solid #ddd; box-shadow: 0 2px 8px rgba(0, 0, 0, 0.5); display: flex; flex-direction: column; overflow: hidden; }
.alert h2 { font-size: 15px; font-weight: 600; line-height: 24px; padding: 20px 20px 8px; }
.alert-body { height: 192px; display: flex; border-bottom: 1px solid #d3e3fd; overflow: hidden; }
.alert-text { flex: 1; padding: 1px 0 0 20px; font-family: "Noto Sans", sans-serif; font-size: 12px; line-height: 20px; }
.alert-text .first { display: flex; align-items: center; gap: 6px; margin-bottom: 20px; padding-left: 1px; }
.light-scroll { width: 16px; background: #f0f0f0; padding: 17px 7px 0; flex: none; }
.light-scroll i { display: block; width: 2px; height: 63px; background: #858585; }
.light-scroll.tall i { height: 115px; }
.alert-foot { padding: 16px 20px; display: flex; justify-content: flex-end; }
.alert-foot button { width: 64px; height: 38px; border-radius: 19px; background: #0b57d0; color: #fff; font-weight: 600; font-size: 12px; }
.downloads { position: absolute; z-index: 3; top: 80px; right: 77px; width: 322px; height: 545px; background: #fff; border-radius: 12px; border: 1px solid #ddd; box-shadow: 0 2px 8px rgba(0, 0, 0, 0.5); display: flex; flex-direction: column; overflow: hidden; }
.downloads-head { height: 49px; flex: none; display: flex; align-items: flex-start; justify-content: space-between; padding: 15px 19px 0 20px; }
.downloads-head h2 { font-size: 15px; line-height: 26px; font-weight: 600; }
.downloads-head button { width: 22px; height: 22px; border: 2px solid #0b57d0; border-radius: 50%; }
.downloads-body { flex: 1; min-height: 0; display: flex; border-bottom: 1px solid #d3e3fd; }
ul { flex: 1; list-style: none; }
li { display: flex; gap: 16px; padding: 8px 0 8px 23px; }
li svg { margin-top: 3px; }
.name { font-size: 12px; font-weight: 600; line-height: 20px; }
.meta { font-size: 11px; line-height: 16px; color: #5a5d61; }
.compact { padding-bottom: 0; }
.compact .name { height: 36px; overflow: hidden; margin: -3px 0; }
li.compact + li { padding-top: 6px; }
.downloads-foot { height: 45px; padding: 10px 22px 0 20px; display: flex; justify-content: space-between; font-size: 12px; font-weight: 600; line-height: 18px; }
</style>
